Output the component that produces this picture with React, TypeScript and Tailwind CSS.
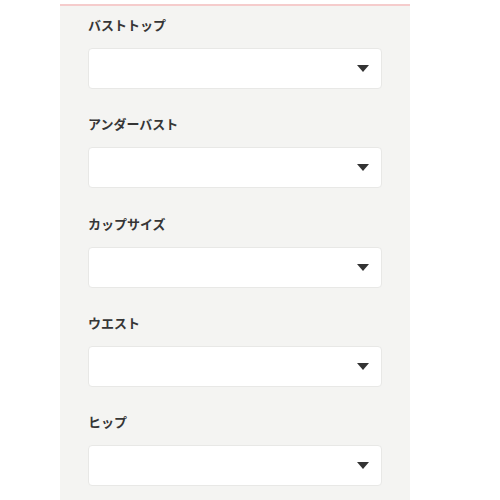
const fields = ["バストトップ", "アンダーバスト", "カップサイズ", "ウエスト", "ヒップ"];

export default function App() {
  return (
    <div className="w-[500px] h-[500px] overflow-hidden bg-white" style={{ fontFamily: '"Noto Sans CJK JP", "Noto Sans", sans-serif' }}>
      <div className="ml-[60px] mt-[4px] w-[350px] h-[496px] bg-[#f4f4f2] border-t-2 border-[#f5cccc] px-[28px] pt-[9px]">
        {fields.map((f, i) => (
          <div key={f} className={i === 0 ? "" : "mt-[25.25px]"}>
            <div className="h-[20px] leading-[20px] text-[13px] font-bold text-[#363636]">{f}</div>
            <div className="mt-[13px] h-[41px] bg-white border border-[#e8e8e6] rounded-[4px] flex items-center justify-end pr-[12px]">
              <svg width="12" height="7" viewBox="0 0 12 7">
                <path d="M0 0 L12 0 L6 7 Z" fill="#333" />
              </svg>
            </div>
          </div>
        ))}
      </div>
    </div>
  );
}
